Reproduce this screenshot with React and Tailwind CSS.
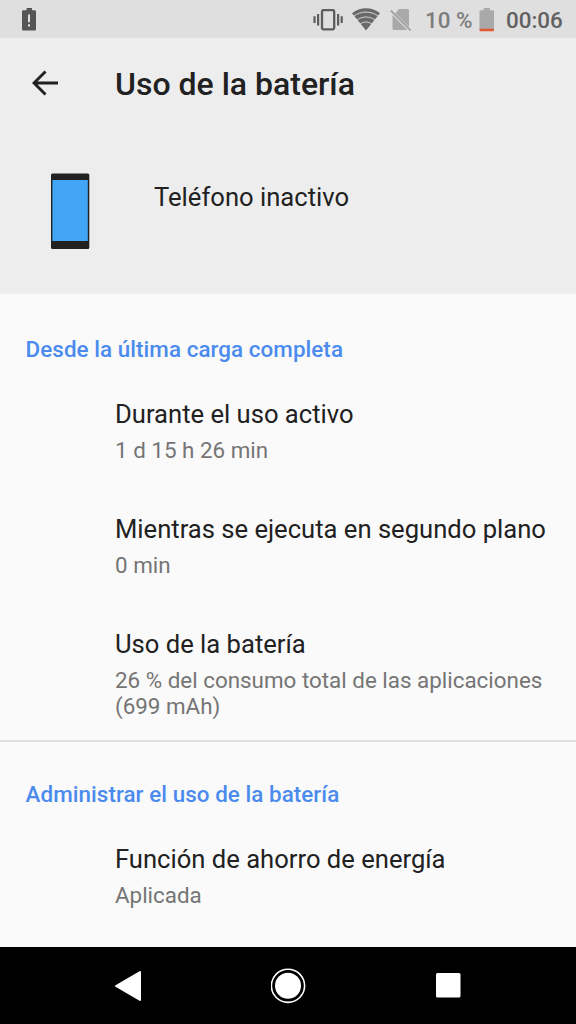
function LowBatteryIcon() {
  return (
    <svg width="16" height="24" viewBox="0 0 16 24" className="shrink-0">
      <path fill="#555" d="M4.600 0h5.400v2.200h2.600c.9 0 1.400.6 1.400 1.400v17.600c0 .9-.6 1.400-1.400 1.400H1.400C.6 22.600 0 22.100 0 21.200V3.600c0-.8.6-1.400 1.400-1.400h3.200z" />
      <path fill="#dfdfdf" d="M6 6.600h2v7.600H6zM6 16.200h2v2.200H6z" />
    </svg>
  )
}

function VibrateIcon() {
  return (
    <svg width="30" height="24" viewBox="0 0 30 24" className="shrink-0">
      <rect x="9" y="2.100" width="12.200" height="19.200" rx="1.300" fill="none" stroke="#5d5d5d" strokeWidth="2.300" />
      <path d="M1.500 8.200v6.800M5.100 6v11.500M25.100 6v11.500M28.700 8.200v6.800" stroke="#5d5d5d" strokeWidth="2.200" />
    </svg>
  )
}

function WifiIcon() {
  return (
    <svg width="28" height="24" viewBox="0 0 28 24" className="shrink-0">
      <path d="M0 5.300C8 -1.400 20 -1.400 28 5.300L14 22.600z" fill="#696969" />
      <path d="M1.800 8.100c7.500-5.400 16.900-5.400 24.400 0M4.900 12c6-4 12.200-4 18.200 0M8.200 15.900c4-2.500 7.600-2.500 11.600 0" fill="none" stroke="#dfdfdf" strokeWidth="0.900" />
    </svg>
  )
}

function NoSimIcon() {
  return (
    <svg width="22" height="24" viewBox="0 0 22 24" className="shrink-0">
      <path fill="#a9a9a9" d="M9 1h8.500c1 0 1.500.6 1.500 1.500v16.600L5.400 5.300zM2.500 6.900L17.400 22H4c-.9 0-1.500-.6-1.500-1.500z" />
      <path d="M.8 2.500l19.800 19.800" stroke="#a3a3a3" strokeWidth="1.800" />
    </svg>
  )
}

function BatteryIcon() {
  return (
    <svg width="16" height="24" viewBox="0 0 16 24" className="shrink-0">
      <path fill="#a9a9a9" d="M4.800 0h6v2.200h2.800c.9 0 1.400.5 1.400 1.300V21H.5V3.500c0-.8.5-1.300 1.400-1.300h2.900z" />
      <path fill="#e0592f" d="M.5 20.700H15v1.300c0 .8-.4 1.300-1.200 1.300H1.700c-.8 0-1.200-.5-1.200-1.300z" />
    </svg>
  )
}

function StatusBar() {
  return (
    <div className="flex h-[38px] items-start bg-[#dfdfdf] pl-[22px]">
      <div className="flex pt-[8px]">
        <LowBatteryIcon />
      </div>
      <div className="ml-auto flex h-[38px] items-start pt-[8px] pr-[13px]">
        <VibrateIcon />
        <div className="ml-[9px]"><WifiIcon /></div>
        <div className="ml-[10px]"><NoSimIcon /></div>
        <span className="ml-[13px] w-[48px] text-[22.4px] leading-[24px] font-medium whitespace-nowrap text-[#7c7c7c]">10 %</span>
        <div className="ml-[6px]"><BatteryIcon /></div>
        <span className="ml-[11px] w-[57px] text-[22.4px] leading-[24px] font-medium text-[#616161]">00:06</span>
      </div>
    </div>
  )
}

function Header() {
  return (
    <header className="h-[256px] bg-[#ededed]">
      <div className="flex h-[90px] items-center pl-[32px]">
        <svg width="27" height="26" viewBox="0 0 27 26" className="shrink-0">
          <path d="M26 13H2M13.500 1.500L2 13l11.500 11.500" fill="none" stroke="#212121" strokeWidth="2.900" />
        </svg>
        <h1 className="mt-[2px] ml-[56px] text-[32px] leading-[38px] font-medium whitespace-nowrap text-[#212121]">Uso de la batería</h1>
      </div>
      <div className="flex pt-[45px] pl-[50px]">
        <svg width="40" height="76" viewBox="0 0 40 76" className="shrink-0">
          <rect x="1" y="0.500" width="38.300" height="75.500" rx="1.500" fill="#212121" />
          <rect x="2.400" y="7" width="35.400" height="61" fill="#42a5f5" />
        </svg>
        <p className="mt-[9px] ml-[64px] text-[25.6px] leading-[30px] text-[#212121]">Teléfono inactivo</p>
      </div>
    </header>
  )
}

function SectionTitle({ children }) {
  return <h2 className="pl-[25.6px] text-[22.4px] leading-[26px] font-medium tracking-[0.06px] text-[#4b8bee]">{children}</h2>
}

function Item({ title, children }) {
  return (
    <div className="h-[115px] pl-[115px]">
      <p className="text-[25.6px] leading-[30px] whitespace-nowrap text-[#212121]">{title}</p>
      <p className="mt-2 text-[22.4px] leading-[26px] text-[#757575]">{children}</p>
    </div>
  )
}

function NavBar() {
  return (
    <nav className="flex h-[77px] items-center justify-between bg-black pr-[115px] pl-[114px]">
      <svg width="28" height="32" viewBox="0 0 28 32">
        <path d="M26 2v28L2 16z" fill="#fff" stroke="#fff" strokeWidth="2" strokeLinejoin="round" />
      </svg>
      <svg width="36" height="36" viewBox="0 0 36 36">
        <circle cx="17" cy="17.800" r="16.600" fill="none" stroke="#fff" strokeWidth="1.600" />
        <circle cx="17" cy="17.800" r="13" fill="#fff" />
      </svg>
      <svg width="25" height="25" viewBox="0 0 25 25">
        <rect width="24.500" height="24.500" rx="1.500" fill="#fff" />
      </svg>
    </nav>
  )
}

export default function App() {
  return (
    <div className="flex h-[1024px] w-[576px] flex-col overflow-hidden bg-[#fafafa] font-[Roboto,sans-serif]">
      <StatusBar />
      <Header />
      <main className="min-h-0 flex-1 overflow-hidden">
        <section className="h-[448px] border-b-2 border-[#e0e0e0] pt-[42px]">
          <SectionTitle>Desde la última carga completa</SectionTitle>
          <div className="pt-[37px]">
            <Item title="Durante el uso activo">1 d 15 h 26 min</Item>
            <Item title="Mientras se ejecuta en segundo plano">0 min</Item>
            <Item title="Uso de la batería">
              26 % del consumo total de las aplicaciones (699 mAh)
            </Item>
          </div>
        </section>
        <section className="pt-[39px]">
          <SectionTitle>Administrar el uso de la batería</SectionTitle>
          <div className="pt-[37px]">
            <Item title="Función de ahorro de energía">Aplicada</Item>
          </div>
        </section>
      </main>
      <NavBar />
    </div>
  )
}
